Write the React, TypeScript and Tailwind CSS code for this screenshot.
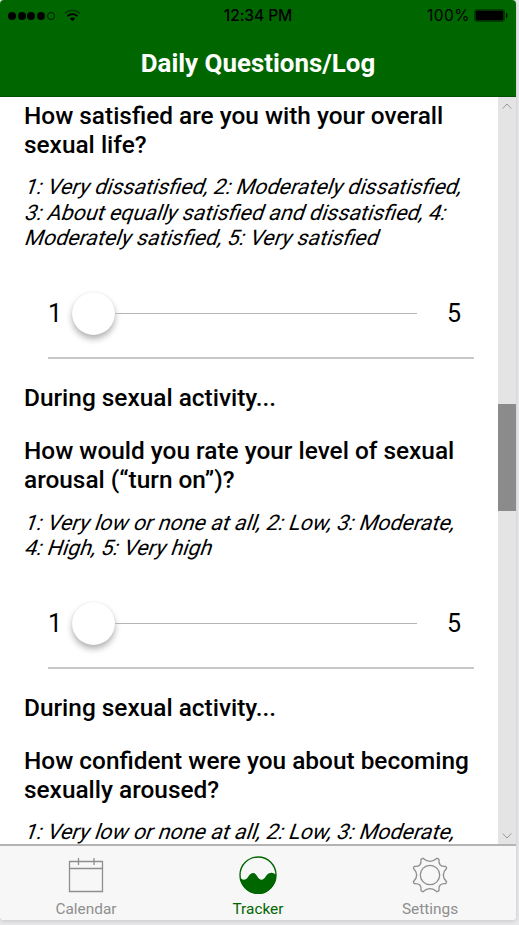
import type { ReactNode } from "react";

function StatusBar() {
  return (
    <div className="flex h-[31px] items-center justify-between pl-2 pr-2 font-['Inter','Roboto',sans-serif] text-[15.5px] text-black">
      <div className="flex w-[150px] items-center gap-[9px]">
        <div className="flex gap-[1.7px]">
          {[0, 1, 2, 3].map((i) => (
            <span key={i} className="size-2 rounded-full bg-black" />
          ))}
          <span className="size-2 rounded-full border border-black/70" />
        </div>
        <svg width="17" height="13" viewBox="0 0 17 13" fill="none">
          <path d="M.9 4.6C5.2.4 11.8.4 16.1 4.6" stroke="#063f03" strokeWidth="1.7" />
          <path d="M3.5 7.2c2.9-2.8 7.1-2.8 10 0" stroke="#000" strokeWidth="1.8" />
          <path d="M5.8 9.5c1.7-1.5 3.7-1.5 5.4 0L8.5 12.3z" fill="#000" />
        </svg>
      </div>
      <span className="whitespace-nowrap text-[15.6px] font-medium leading-none tracking-[-0.1px]">12:34 PM</span>
      <div className="flex w-[150px] items-center justify-end gap-1">
        <span className="text-[15.5px] leading-none tracking-[0.5px]">100%</span>
        <svg width="34" height="13" viewBox="0 0 34 13">
          <rect x=".5" y=".5" width="30" height="12" rx="2" fill="none" stroke="#023d00" />
          <rect x="1.500" y="1.500" width="28" height="10" rx="1" />
          <path d="M32 4c2 .5 2 4.500 0 5z" />
        </svg>
      </div>
    </div>
  );
}

function Heading({ children }: { children: ReactNode }) {
  return <h2 className="whitespace-nowrap text-[24.400px] font-medium leading-[29px]">{children}</h2>;
}

function Scale({ lines }: { lines: string[] }) {
  return (
    <p className="mt-[15px] flex flex-col items-start whitespace-nowrap pl-[2px] text-[21.400px] leading-[25.500px]">
      {lines.map((line) => (
        <span key={line} className="-skew-x-[19deg]">{line}</span>
      ))}
    </p>
  );
}

function Slider() {
  return (
    <div className="ml-6 mt-[24px] flex h-[84px] w-[426px] items-center border-b-2 border-[#c8c8c8] pb-[5px] text-[25px]">
      <span className="w-6 pt-[2px]">1</span>
      <span className="size-[43px] shrink-0 rounded-full bg-white shadow-[0_4px_6px_rgba(0,0,0,0.3),0_0_1px_rgba(0,0,0,0.12)]" />
      <span className="h-px w-[302px] bg-[#b5b5b5]" />
      <span className="ml-[30px] pt-[2px]">5</span>
    </div>
  );
}

function Tab({ label, active, children }: { label: string; active?: boolean; children: ReactNode }) {
  return (
    <div className={`flex w-[172px] flex-col items-center ${active ? "text-[#006600]" : "text-[#8e8e8e]"}`}>
      <div className="flex h-[54px] items-center justify-center pt-1">{children}</div>
      <span className="text-[15.400px] leading-[18px]">{label}</span>
    </div>
  );
}

export default function App() {
  return (
    <div className="h-[925px] w-[519px] overflow-hidden bg-[#e8e8ea] font-['Roboto',sans-serif] text-black">
      <div className="flex h-[920px] w-[516px] flex-col overflow-hidden rounded-[4px] bg-white shadow-[0_1px_4px_rgba(0,0,0,0.15)]">
        <header className="h-[97px] shrink-0 border-b border-[#005000] bg-[#006600]">
          <StatusBar />
          <h1 className="flex h-[64px] items-center justify-center text-[25.900px] font-bold text-white">Daily Questions/Log</h1>
        </header>
        <div className="flex h-[747px] shrink-0">
          <main className="w-[498px] overflow-hidden pl-6 pt-[4px]">
            <section>
              <Heading>How satisfied are you with your overall<br />sexual life?</Heading>
              <Scale lines={["1: Very dissatisfied, 2: Moderately dissatisfied,", "3: About equally satisfied and dissatisfied, 4:", "Moderately satisfied, 5: Very satisfied"]} />
              <Slider />
            </section>
            <section className="pt-[24px]">
              <Heading>During sexual activity...</Heading>
              <div className="h-[24px]" />
              <div className="pb-px">
                <Heading>How would you rate your level of sexual<br />arousal (“turn on”)?</Heading>
              </div>
              <Scale lines={["1: Very low or none at all, 2: Low, 3: Moderate,", "4: High, 5: Very high"]} />
              <Slider />
            </section>
            <section className="pt-[24px]">
              <Heading>During sexual activity...</Heading>
              <div className="h-[24.500px]" />
              <Heading>How confident were you about becoming<br />sexually aroused?</Heading>
              <Scale lines={["1: Very low or none at all, 2: Low, 3: Moderate,"]} />
            </section>
          </main>
          <div className="flex w-[18px] flex-col items-center bg-[#e4e4e4]">
            <svg className="mt-[6px]" width="10" height="7" viewBox="0 0 10 7" fill="none" stroke="#999"><path d="M.7 5.500 5 1l4.300 4.500" /></svg>
            <div className="mt-[294px] h-[107px] w-full bg-[#8b8b8b]" />
            <svg className="mb-[5px] mt-auto" width="10" height="7" viewBox="0 0 10 7" fill="none" stroke="#999"><path d="M.7 1.500 5 6l4.300-4.500" /></svg>
          </div>
        </div>
        <nav className="flex h-[76px] border-t-2 border-[#b4b4b4] bg-[#f7f7f7]">
          <Tab label="Calendar">
            <svg width="36" height="36" viewBox="0 0 36 36" fill="none" stroke="currentColor" strokeWidth="1.300"><path d="M1.500 4.500h33v30h-33zM1.500 11.500h33M10.500 1v7M26 1v7" /></svg>
          </Tab>
          <Tab label="Tracker" active>
            <svg width="38" height="38" viewBox="0 0 38 38">
              <circle cx="19" cy="19" r="18" fill="none" stroke="currentColor" strokeWidth="1.400" />
              <path fill="currentColor" d="M1 21.500C4 25 7 24 9 21C12 16 16 16 18 20C21 25 24 25 27 20C30 16 34 16 37 19A18 18 0 0 1 1 21.500Z" />
            </svg>
          </Tab>
          <Tab label="Settings">
            <svg width="36" height="36" viewBox="0 0 36 36" fill="none" stroke="currentColor" strokeWidth="1.300" strokeLinejoin="round">
              <circle cx="18" cy="18" r="9.700" />
              <path d="M11 1.200Q18 7.500 25 1.200L27 2.400Q26 10 33.800 9.300L34.600 11.200Q28 18 34.600 24.800L33.800 26.700Q26 26 27 33.600L25 34.800Q18 28.500 11 34.800L9 33.600Q10 26 2.200 26.700L1.400 24.800Q8 18 1.400 11.200L2.200 9.300Q10 10 9 2.400Z" />
            </svg>
          </Tab>
        </nav>
      </div>
    </div>
  );
}
